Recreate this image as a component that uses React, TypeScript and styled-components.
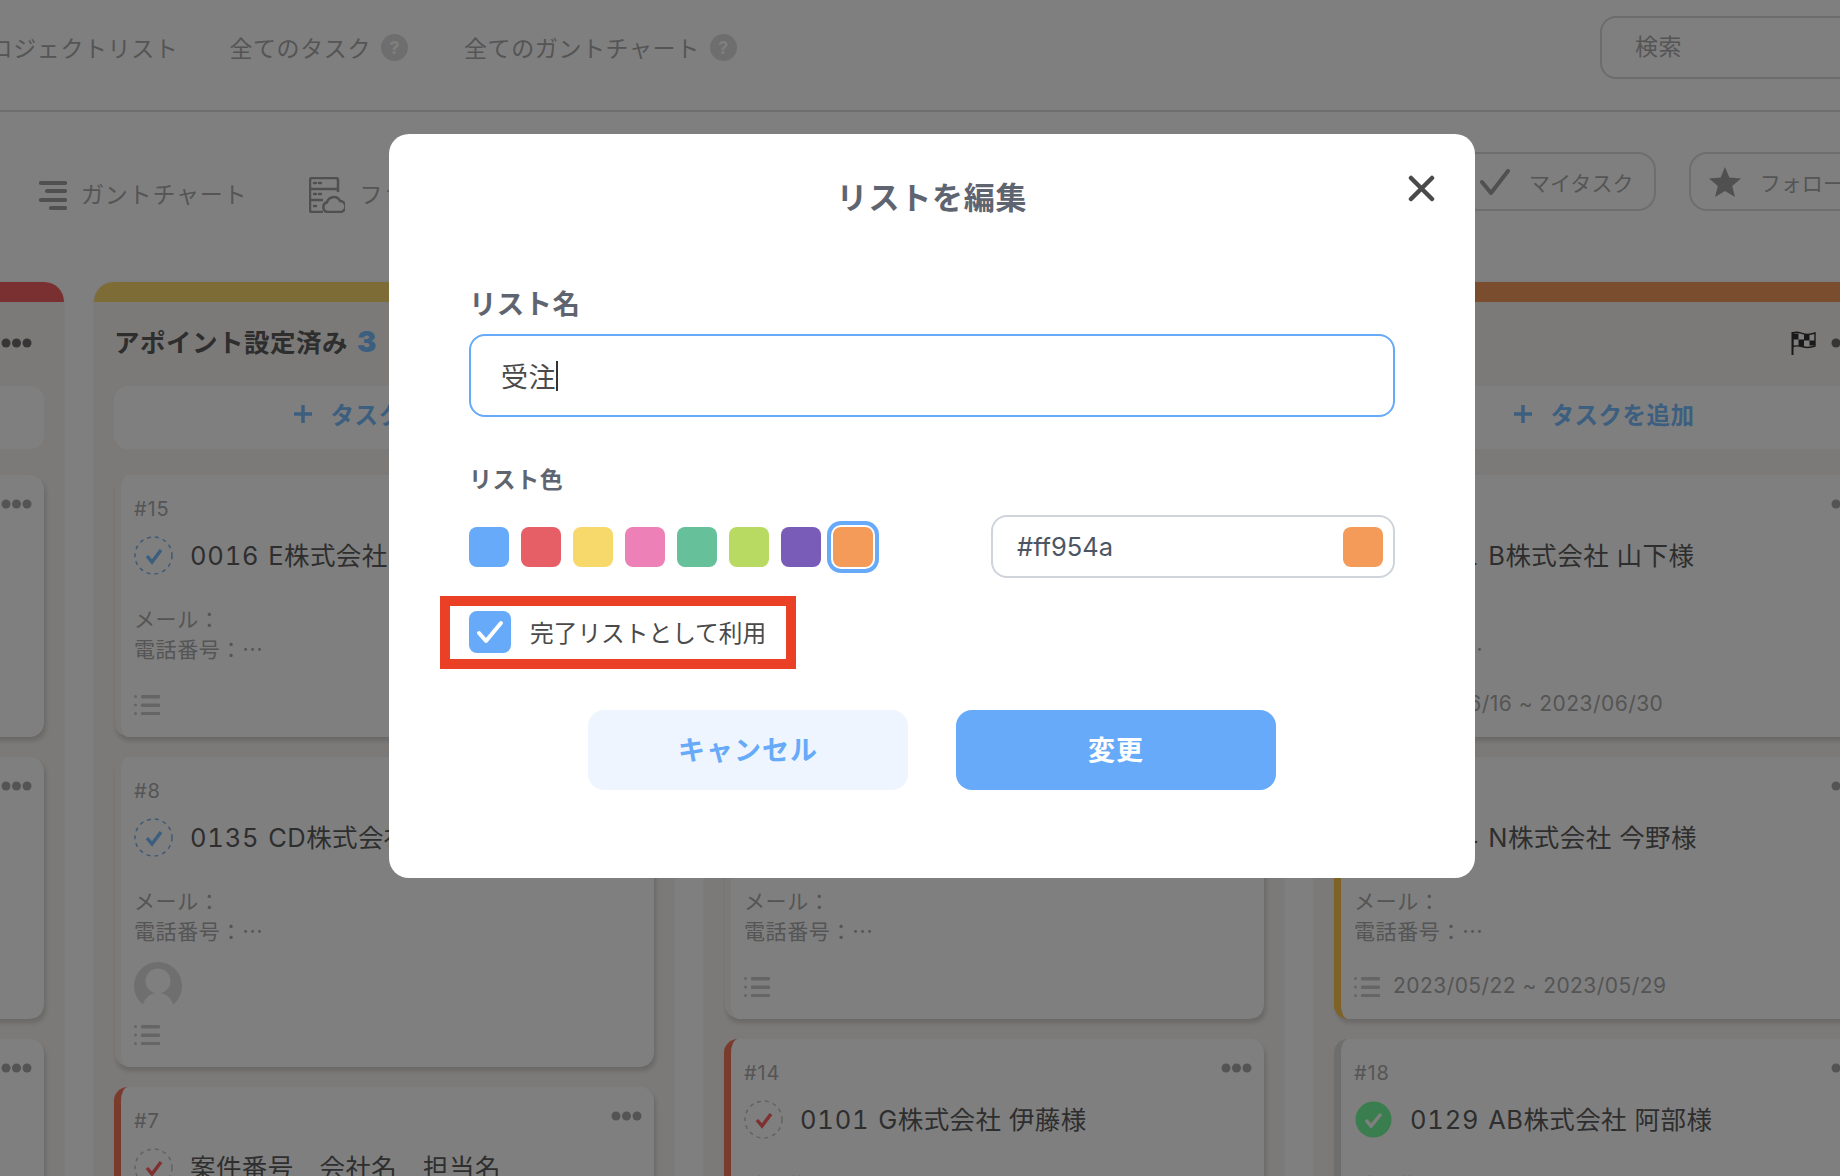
import React from 'react'
import styled, {createGlobalStyle} from 'styled-components'

const GlobalStyle = createGlobalStyle`
  html, body {
    margin: 0;
    padding: 0;
    width: 1840px;
    height: 1176px;
    overflow: hidden;
    background: #fff;
    font-family: Inter, "Noto Sans CJK JP", sans-serif;
  }
  * {
    box-sizing: border-box;
  }
`

const Page = styled.div`
  width: 1840px;
  height: 1176px;
  overflow: hidden;
`

const TopBar = styled.header`
  display: flex;
  align-items: center;
  height: 112px;
  padding-bottom: 16px;
  border-bottom: 2px solid #dcdcdc;
  color: #aaa;
  font-size: 23px;
  letter-spacing: 0.6px;
  white-space: nowrap;
`

const NavItem = styled.div<{$left: number}>`
  display: flex;
  align-items: center;
  flex: none;
  gap: 10px;
  margin-left: ${p => p.$left}px;
`

const HelpDot = styled.span`
  display: flex;
  align-items: center;
  justify-content: center;
  width: 27px;
  height: 27px;
  border-radius: 50%;
  background: #dcdcdc;
  color: #fff;
  font-size: 18px;
  font-weight: 700;
  letter-spacing: 0;
`

const SearchBox = styled.input`
  flex: none;
  width: 320px;
  height: 63px;
  margin-left: auto;
  margin-right: -80px;
  padding: 0 33px;
  border: 2px solid #d8d8d8;
  border-radius: 16px;
  background: transparent;
  font: inherit;
  letter-spacing: 0.6px;
  &::placeholder {
    color: #aaa;
    opacity: 1;
  }
`

const ToolBar = styled.div`
  display: grid;
  grid-template-columns: 1421px auto;
  align-items: start;
  height: 170px;
  padding: 40px 0 0 39px;
  color: #aaa;
  font-size: 23px;
  letter-spacing: 0.8px;
  white-space: nowrap;
`

const ViewTabs = styled.div`
  display: flex;
  align-items: center;
  gap: 62px;
  height: 36px;
  margin-top: 25px;
`

const ViewTab = styled.div`
  display: flex;
  align-items: center;
  gap: 14px;
  color: #aaa;
  span {
    margin-top: -4px;
  }
`

const Filters = styled.div`
  display: flex;
  gap: 33px;
`

const FilterPill = styled.div`
  display: flex;
  align-items: center;
  flex: none;
  gap: 19px;
  height: 59px;
  padding: 0 20px 0 18px;
  border: 2px solid #dcdcdc;
  border-radius: 18px;
  font-size: 21px;
  letter-spacing: 0.1px;
`

const Board = styled.main`
  display: flex;
  gap: 30px;
  margin-left: -516px;
`

const Column = styled.section`
  flex: none;
  width: 580px;
  height: 1200px;
  padding: 0 20px;
  border-radius: 20px 20px 0 0;
  background: #f6f4f0;
  box-shadow: 0 0 3px rgba(0, 0, 0, 0.08);
`

const ColorBar = styled.div<{$color: string}>`
  height: 20px;
  margin: 0 -20px;
  border-radius: 20px 20px 0 0;
  background: ${p => p.$color};
`

const ColumnHead = styled.div`
  display: flex;
  align-items: center;
  justify-content: space-between;
  height: 84px;
  padding: 0 12px 2px 0;
`

const ColumnTitle = styled.h2`
  margin: -5px 0 0;
  color: #5c5c5c;
  font-size: 25.5px;
  font-weight: 700;
  letter-spacing: 0.5px;
  white-space: nowrap;
  b {
    margin-left: 9px;
    color: #78bcff;
    font-size: 29px;
  }
`

const HeadTools = styled.div`
  display: flex;
  align-items: center;
  gap: 15px;
`

const HeadMenu = styled.svg`
  width: 31px;
  height: 10px;
  fill: #6c6c6c;
`

const AddTask = styled.div`
  display: flex;
  align-items: center;
  justify-content: center;
  gap: 19px;
  height: 63px;
  margin-bottom: 26px;
  padding-bottom: 7px;
  border-radius: 14px;
  background: #fff;
  color: #78bcff;
  font-size: 23.5px;
  font-weight: 700;
  letter-spacing: 0.5px;
`

const Card = styled.article<{$stripe?: string}>`
  display: flex;
  flex-direction: column;
  position: relative;
  margin-bottom: 20px;
  padding: 20px 20px 22px 13px;
  border-left: 7px solid ${p => p.$stripe ?? 'transparent'};
  border-radius: 14px;
  background: #fff;
  background-clip: padding-box;
  box-shadow: 2px 4px 4px rgba(0, 0, 0, 0.14);
`

const CardMenu = styled.svg`
  position: absolute;
  top: 24px;
  right: 12px;
  width: 31px;
  height: 10px;
  fill: #a8a8a8;
`

const CardNo = styled.div`
  height: 30px;
  color: #aaa;
  font-size: 20px;
  line-height: 28px;
  letter-spacing: 0.8px;
`

const TitleRow = styled.div`
  display: flex;
  align-items: center;
  gap: 17px;
  height: 39px;
  margin-top: 11px;
  color: #5c5c5c;
  font-size: 25.5px;
  letter-spacing: 0.4px;
  white-space: pre;
`

const TitleText = styled.span`
  margin-top: -5px;
`

const TaskCode = styled.span`
  margin-right: 9px;
  font-variant-numeric: tabular-nums;
  letter-spacing: 0.8px;
`

const Meta = styled.div`
  margin: 30px 0 15px;
  color: #aaa;
  font-size: 21px;
  line-height: 30px;
  letter-spacing: 0.6px;
`

const Footer = styled.div`
  display: flex;
  align-items: center;
  gap: 13px;
  height: 20px;
  margin-top: 15px;
  color: #aaa;
  font-size: 21px;
  letter-spacing: 0.45px;
  span {
    margin-top: -4px;
  }
`

const Overlay = styled.div`
  display: flex;
  align-items: flex-start;
  position: fixed;
  left: 0;
  top: 0;
  width: 100%;
  height: 100%;
  padding: 134px 0 0 389px;
  background: rgba(0, 0, 0, 0.5);
`

const Modal = styled.div`
  position: relative;
  width: 1086px;
  height: 744px;
  padding: 44px 80px 0;
  border-radius: 20px;
  background: #fff;
`

const CloseButton = styled.svg`
  position: absolute;
  top: 41px;
  right: 40px;
  width: 27px;
  height: 27px;
  fill: none;
  stroke: #4a4a4a;
  stroke-width: 4.5;
  stroke-linecap: round;
`

const ModalTitle = styled.h1`
  margin: 0 0 69px;
  color: #5f6570;
  font-size: 31px;
  font-weight: 700;
  line-height: 40px;
  letter-spacing: 0.8px;
  text-align: center;
`

const NameLabel = styled.div`
  color: #5f6570;
  font-size: 27.5px;
  font-weight: 700;
  line-height: 34px;
  letter-spacing: 0.3px;
`

const NameField = styled.div`
  display: flex;
  align-items: center;
  height: 83px;
  margin-top: 13px;
  padding: 0 30px;
  border: 2px solid #66aaf9;
  border-radius: 16px;
  color: #4a4a4a;
  font-size: 27px;
  letter-spacing: 0.5px;
`

const Caret = styled.span`
  width: 1.5px;
  height: 30px;
  background: #333;
`

const ColorLabel = styled.div`
  margin-top: 48px;
  color: #5f6570;
  font-size: 23px;
  font-weight: 700;
  line-height: 30px;
  letter-spacing: 0.6px;
`

const ColorRow = styled.div`
  display: flex;
  align-items: center;
  justify-content: space-between;
  margin-top: 20px;
`

const Swatches = styled.div`
  display: flex;
  gap: 12px;
`

const Swatch = styled.div<{$color: string; $selected?: boolean}>`
  width: 40px;
  height: 40px;
  border-radius: 8px;
  background: ${p => p.$color};
  box-shadow: ${p => (p.$selected ? '0 0 0 2px #fff, 0 0 0 6px #66aaf9' : 'none')};
`

const HexField = styled.div`
  display: flex;
  align-items: center;
  justify-content: space-between;
  width: 404px;
  height: 63px;
  padding: 0 10px 0 24px;
  border: 2px solid #cfd4da;
  border-radius: 16px;
  color: #4b5563;
  font-size: 25.5px;
  letter-spacing: 0;
`

const DoneRow = styled.div`
  display: flex;
  align-items: center;
  gap: 19px;
  position: relative;
  height: 42px;
  margin-top: 33px;
  color: #4a4a4a;
  font-size: 23.7px;
  letter-spacing: 0;
`

const CheckBox = styled.div`
  display: flex;
  align-items: center;
  justify-content: center;
  width: 42px;
  height: 42px;
  border-radius: 8px;
  background: #66aaf9;
`

const Highlight = styled.div`
  position: absolute;
  left: -29px;
  top: -15px;
  width: 356px;
  height: 73px;
  border: 10px solid #ea4025;
`

const Actions = styled.div`
  display: flex;
  justify-content: center;
  gap: 48px;
  margin-top: 57px;
`

const ActionButton = styled.button<{$primary?: boolean}>`
  width: 320px;
  height: 80px;
  padding: 0 0 3px;
  border: none;
  border-radius: 16px;
  background: ${p => (p.$primary ? '#66aaf9' : '#eef5fe')};
  color: ${p => (p.$primary ? '#fff' : '#66aaf9')};
  font-family: inherit;
  font-size: 27px;
  font-weight: 700;
  letter-spacing: 1px;
`

function GanttIcon() {
  return (
    <svg width="28" height="30" viewBox="0 0 28 30" fill="none" stroke="#a0a0a0" strokeWidth="4.2" strokeLinecap="round">
      <path d="M2 3h24M8 11h18M2 20h24M12 28h14"/>
    </svg>
  )
}

function FileCloudIcon() {
  return (
    <svg width="36" height="36" viewBox="0 0 36 36" fill="none" stroke="#a0a0a0" strokeWidth="2.5">
      <path d="M14 35H3a2 2 0 0 1-2-2V3a2 2 0 0 1 2-2h24a2 2 0 0 1 2 2v12"/>
      <path d="M1 12h28M1 23h13"/>
      <path d="M5 6h2M10 6h2M5 17h2M10 17h2M5 29h2" strokeLinecap="round"/>
      <path d="M19 35a5 5 0 0 1-1-9.800 7 7 0 0 1 13-1.200 5.500 5.500 0 0 1 0 11z"/>
    </svg>
  )
}

function TickIcon() {
  return (
    <svg width="30" height="26" viewBox="0 0 30 26" fill="none" stroke="#a0a0a0" strokeWidth="4" strokeLinecap="round" strokeLinejoin="round">
      <path d="M2 13l9 11L28 2"/>
    </svg>
  )
}

function StarIcon() {
  return (
    <svg width="32" height="30" viewBox="0 0 32 30" fill="#a0a0a0">
      <path d="M16 0l4.400 10.600L32 11.500l-8.800 7.500L26 30l-10-6-10 6 2.800-11L0 11.500l11.600-.9z"/>
    </svg>
  )
}

function FlagIcon() {
  return (
    <svg width="25" height="24" viewBox="0 0 25 24" fill="none">
      <path d="M1.500 1v23" stroke="#333" strokeWidth="2"/>
      <path d="M2 2c4-2 7 0 11 1 4 .8 7 .5 11-1v13c-4 1.500-7 2-11 1-4-1-7-2-11-.5z" fill="#fff" stroke="#333" strokeWidth="1.400"/>
      <path d="M2 2.500h5.500v6H2zM13 3.500h5.500v6H13zM7.500 8.500H13v6.500H7.500zM18.500 9.500H24v5h-5.500z" fill="#333"/>
    </svg>
  )
}

function ListIcon() {
  return (
    <svg width="26" height="20" viewBox="0 0 26 20" fill="#cacaca">
      <rect x="0" y="0" width="3" height="3" rx="1.500"/>
      <rect x="0" y="8.500" width="3" height="3" rx="1.500"/>
      <rect x="0" y="17" width="3" height="3" rx="1.500"/>
      <rect x="7" y="0" width="19" height="3.400" rx="1"/>
      <rect x="7" y="8.500" width="19" height="3.400" rx="1"/>
      <rect x="7" y="17" width="19" height="3.400" rx="1"/>
    </svg>
  )
}

function TaskCheck({color, ring}: {color: string; ring: string}) {
  return (
    <svg width="39" height="39" viewBox="0 0 39 39" fill="none">
      <circle cx="19.500" cy="19.500" r="18.500" stroke={ring} strokeWidth="1.500" strokeDasharray="4 4"/>
      <path d="M13 20l5 6 9-12" stroke={color} strokeWidth="3.500"/>
    </svg>
  )
}

function DoneCheck() {
  return (
    <svg width="39" height="39" viewBox="0 0 39 39" fill="none">
      <circle cx="19.500" cy="19.500" r="18" fill="#74fa9c"/>
      <path d="M12 20l5 6 10-12" stroke="#fff" strokeWidth="3.500"/>
    </svg>
  )
}

function AvatarIcon() {
  return (
    <svg width="48" height="48" viewBox="0 0 48 48">
      <circle cx="24" cy="24" r="24" fill="#dedede"/>
      <circle cx="24" cy="19" r="12.500" fill="#fff"/>
      <path d="M8 48c1-12 8-17 16-17s15 5 16 17z" fill="#fff"/>
    </svg>
  )
}

type TTask = {
  no: number
  code?: string
  title: string
  check: 'blue' | 'red' | 'done'
  stripe?: string
  avatar?: boolean
  date?: string
}

type TList = {
  name: string
  count: number
  color: string
  flag?: boolean
  tasks: TTask[]
}

const stripeRed = '#f47458'
const stripeOrange = '#ffc44a'
const stripeGrey = '#dcdcdc'

const lists: TList[] = [
  {
    name: '新規',
    count: 3,
    color: '#f45e60',
    tasks: [
      {no: 21, code: '0140', title: 'P株式会社 田中様', check: 'blue'},
      {no: 20, code: '0139', title: 'Q株式会社 鈴木様', check: 'blue'},
      {no: 19, code: '0138', title: 'R株式会社 高橋様', check: 'blue'},
    ],
  },
  {
    name: 'アポイント設定済み',
    count: 3,
    color: '#fad86c',
    tasks: [
      {no: 15, code: '0016', title: 'E株式会社 佐藤様', check: 'blue'},
      {no: 8, code: '0135', title: 'CD株式会社 小林様', check: 'blue', avatar: true},
      {no: 7, title: '案件番号　会社名　担当名', check: 'red', stripe: stripeRed},
    ],
  },
  {
    name: '提案中',
    count: 3,
    color: '#ed81b7',
    tasks: [
      {no: 12, code: '0110', title: 'K株式会社 中村様', check: 'blue'},
      {no: 11, code: '0105', title: 'L株式会社 加藤様', check: 'blue'},
      {no: 14, code: '0101', title: 'G株式会社 伊藤様', check: 'red', stripe: stripeRed},
    ],
  },
  {
    name: '受注',
    count: 3,
    color: '#f69a5e',
    flag: true,
    tasks: [
      {no: 17, code: '0121', title: 'B株式会社 山下様', check: 'blue', date: '2023/06/16 ~ 2023/06/30'},
      {no: 16, code: '0114', title: 'N株式会社 今野様', check: 'blue', stripe: stripeOrange, date: '2023/05/22 ~ 2023/05/29'},
      {no: 18, code: '0129', title: 'AB株式会社 阿部様', check: 'done', stripe: stripeGrey},
    ],
  },
]

const swatchColors = ['#66aaf9', '#e65f66', '#f7d96b', '#ec80b7', '#66c19a', '#b8da63', '#795cb8', '#f59b5a']

function TaskCard({task}: {task: TTask}) {
  return (
    <Card $stripe={task.stripe}>
      <CardMenu viewBox="0 0 31 10">
        <circle cx="5" cy="5" r="4.500"/>
        <circle cx="15.500" cy="5" r="4.500"/>
        <circle cx="26" cy="5" r="4.500"/>
      </CardMenu>
      <CardNo>#{task.no}</CardNo>
      <TitleRow>
        {task.check === 'done' && <DoneCheck/>}
        {task.check === 'blue' && <TaskCheck color="#78bcff" ring="#80b4e8"/>}
        {task.check === 'red' && <TaskCheck color="#ff6060" ring="#c4c4c4"/>}
        <TitleText>
          {task.code && <TaskCode>{task.code}</TaskCode>}
          {task.title}
        </TitleText>
      </TitleRow>
      <Meta>
        <div>メール：</div>
        <div>電話番号：⋯</div>
      </Meta>
      {task.avatar && <AvatarIcon/>}
      <Footer>
        <ListIcon/>
        {task.date && <span>{task.date}</span>}
      </Footer>
    </Card>
  )
}

export default function App() {
  return (
    <Page>
      <GlobalStyle/>
      <TopBar>
        <NavItem $left={-34}>プロジェクトリスト</NavItem>
        <NavItem $left={51}>全てのタスク<HelpDot>?</HelpDot></NavItem>
        <NavItem $left={56}>全てのガントチャート<HelpDot>?</HelpDot></NavItem>
        <SearchBox placeholder="検索" readOnly/>
      </TopBar>
      <ToolBar>
        <ViewTabs>
          <ViewTab><GanttIcon/><span>ガントチャート</span></ViewTab>
          <ViewTab><FileCloudIcon/><span>ファイル</span></ViewTab>
        </ViewTabs>
        <Filters>
          <FilterPill><TickIcon/>マイタスク</FilterPill>
          <FilterPill><StarIcon/>フォロー中</FilterPill>
        </Filters>
      </ToolBar>
      <Board>
        {lists.map(list => (
          <Column key={list.name}>
            <ColorBar $color={list.color}/>
            <ColumnHead>
              <ColumnTitle>{list.name}<b>{list.count}</b></ColumnTitle>
              <HeadTools>
                {list.flag && <FlagIcon/>}
                <HeadMenu viewBox="0 0 31 10">
                  <circle cx="5" cy="5" r="4.500"/>
                  <circle cx="15.500" cy="5" r="4.500"/>
                  <circle cx="26" cy="5" r="4.500"/>
                </HeadMenu>
              </HeadTools>
            </ColumnHead>
            <AddTask>
              <svg width="18" height="18" viewBox="0 0 18 18" stroke="#78bcff" strokeWidth="3.500">
                <path d="M9 0v18M0 9h18"/>
              </svg>
              タスクを追加
            </AddTask>
            {list.tasks.map(task => <TaskCard key={task.no} task={task}/>)}
          </Column>
        ))}
      </Board>
      <Overlay>
        <Modal>
          <CloseButton viewBox="0 0 27 27">
            <path d="M3 3l21 21M24 3L3 24"/>
          </CloseButton>
          <ModalTitle>リストを編集</ModalTitle>
          <NameLabel>リスト名</NameLabel>
          <NameField>受注<Caret/></NameField>
          <ColorLabel>リスト色</ColorLabel>
          <ColorRow>
            <Swatches>
              {swatchColors.map((color, i) => (
                <Swatch key={color} $color={color} $selected={i === swatchColors.length - 1}/>
              ))}
            </Swatches>
            <HexField>
              #ff954a
              <Swatch $color="#f59b5a"/>
            </HexField>
          </ColorRow>
          <DoneRow>
            <CheckBox>
              <svg width="28" height="24" viewBox="0 0 28 24" fill="none" stroke="#fff" strokeWidth="4" strokeLinecap="round" strokeLinejoin="round">
                <path d="M3 13l7 8L25 3"/>
              </svg>
            </CheckBox>
            完了リストとして利用
            <Highlight/>
          </DoneRow>
          <Actions>
            <ActionButton>キャンセル</ActionButton>
            <ActionButton $primary>変更</ActionButton>
          </Actions>
        </Modal>
      </Overlay>
    </Page>
  )
}
